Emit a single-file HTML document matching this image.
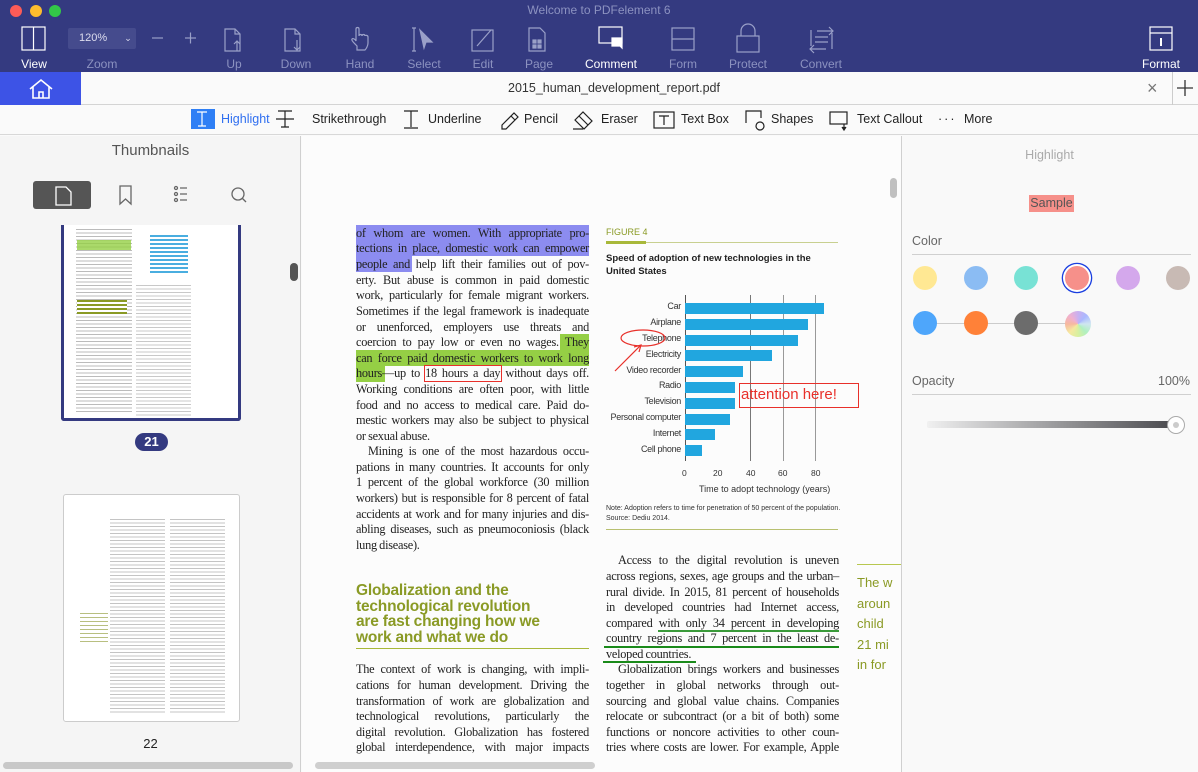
<!DOCTYPE html>
<html><head><meta charset="utf-8"><style>
*{margin:0;padding:0;box-sizing:border-box}
body{width:1198px;height:772px;overflow:hidden;position:relative;background:#fafafa;font-family:"Liberation Sans",sans-serif}
.a{position:absolute}
#top{left:0;top:0;width:1198px;height:72px;background:#343a80}
.tl{top:64px;font-size:12px;color:#8c92c0;transform:translate(-50%,-50%);white-space:nowrap}
.tl.w{color:#fff}
.ct{top:119px;font-size:12.5px;color:#222;transform:translateY(-50%);white-space:nowrap}
.L{position:absolute;width:233px;font-family:"Liberation Serif",serif;font-size:12.3px;color:#222;text-align:justify;text-align-last:justify;white-space:nowrap;line-height:15px;letter-spacing:-0.25px;word-spacing:-0.5px}
.L.e{text-align-last:left}
.bar{position:absolute;left:685px;height:11px;background:#21a6df}
.lab{position:absolute;right:517px;font-size:9px;color:#333;font-family:"Liberation Sans",sans-serif;letter-spacing:-0.3px}
.sw{position:absolute;width:24px;height:24px;border-radius:50%}
.g{color:#8a9a25;font-weight:bold;font-size:15.5px;line-height:15.5px;font-family:"Liberation Sans",sans-serif;letter-spacing:-0.2px}
</style></head><body>
<div id="top" class="a"></div>
<div class="a" style="left:10px;top:5px;width:12px;height:12px;border-radius:50%;background:#fc5b57"></div>
<div class="a" style="left:30px;top:5px;width:12px;height:12px;border-radius:50%;background:#fdbc2e"></div>
<div class="a" style="left:49px;top:5px;width:12px;height:12px;border-radius:50%;background:#33c748"></div>
<div class="a" style="left:0;top:3px;width:1198px;text-align:center;font-size:12px;color:#8c92c0">Welcome to PDFelement 6</div>
<svg class="a" style="left:0;top:20px" width="1198" height="40" fill="none" stroke-width="1.2">
<g stroke="#fff"><rect x="22" y="7" width="23" height="23"/><line x1="33.5" y1="7" x2="33.5" y2="30"/></g>
<g stroke="#9aa0c8"><line x1="152" y1="18" x2="163" y2="18"/><line x1="185" y1="18" x2="196" y2="18"/><line x1="190.5" y1="12.5" x2="190.5" y2="23.5"/>
<path d="M225 9h10l5 5v17h-15z"/><path d="M235 9v5h5"/><path d="M237 31v-10m-3 3l3-3 3 3"/>
<path d="M285 9h10l5 5v17h-15z"/><path d="M295 9v5h5"/><path d="M297 20v10m-3-3l3 3 3-3"/>
<path d="M357 26c-3-3-6-6-5-7s3 0 4 2v-12c0-2 3-2 3 0v7c0-2 3-2 3 0 0-2 3-2 3 0 0-1 3-1 3 1v6c0 3-2 6-3 7h-8z"/>
<path d="M414 8v23m-2-23h4m-4 23h4"/><path d="M420 10l12 12h-6l-2 6z" fill="#9aa0c8"/>
<rect x="472" y="10" width="21" height="21"/><path d="M477 26l14-16"/>
<path d="M529 8h11l5 5v18h-16z"/><rect x="533" y="20" width="3" height="3" fill="#9aa0c8"/><rect x="538" y="20" width="3" height="3" fill="#9aa0c8"/><rect x="533" y="25" width="3" height="3" fill="#9aa0c8"/><rect x="538" y="25" width="3" height="3" fill="#9aa0c8"/>
<rect x="672" y="8" width="22" height="22"/><line x1="672" y1="19" x2="694" y2="19"/>
<rect x="737" y="16" width="22" height="16"/><path d="M741 16v-5a7 7 0 0 1 14 0v5"/>
<path d="M817 11h16m-4-4l4 4-4 4M826 29h-16m4-4l-4 4 4 4M811 10v16M832 13v16M815 17h13M815 22h13"/></g>
<g stroke="#fff"><rect x="599" y="7" width="23" height="16"/><path d="M612 18h10v10l-2-2h-8z" fill="#fff"/>
<rect x="1150" y="7" width="22" height="23"/><line x1="1150" y1="13" x2="1172" y2="13"/><line x1="1161" y1="18" x2="1161" y2="26" stroke-width="2"/></g>
</svg>
<div class="a" style="left:68px;top:28px;width:68px;height:21px;background:#454b8d;border-radius:2px;color:#dde;font-size:11px;line-height:21px;padding-left:11px">120% <span style="margin-left:14px;font-size:9px">&#8964;</span></div>
<div class="a tl w" style="left:34px">View</div>
<div class="a tl" style="left:102px">Zoom</div>
<div class="a tl" style="left:234px">Up</div>
<div class="a tl" style="left:296px">Down</div>
<div class="a tl" style="left:360px">Hand</div>
<div class="a tl" style="left:424px">Select</div>
<div class="a tl" style="left:483px">Edit</div>
<div class="a tl" style="left:539px">Page</div>
<div class="a tl w" style="left:611px">Comment</div>
<div class="a tl" style="left:683px">Form</div>
<div class="a tl" style="left:748px">Protect</div>
<div class="a tl" style="left:821px">Convert</div>
<div class="a tl w" style="left:1161px">Format</div>
<div class="a" style="left:0;top:72px;width:1198px;height:33px;background:#fafafa;border-bottom:1px solid #d4d4d4"></div>
<div class="a" style="left:0;top:72px;width:81px;height:33px;background:#3d53e6"></div>
<svg class="a" style="left:28px;top:78px" width="26" height="22" fill="none" stroke="#fff" stroke-width="1.6"><path d="M2 11L13 2l11 9M5 9v11h16V9M11 20v-6h4v6"/></svg>
<div class="a" style="left:0;top:81px;width:1198px;text-align:center;font-size:12.5px;color:#333;padding-left:30px">2015_human_development_report.pdf</div>
<div class="a" style="left:1147px;top:78px;font-size:18px;color:#777">×</div>
<div class="a" style="left:1172px;top:72px;width:1px;height:33px;background:#ccc"></div>
<svg class="a" style="left:1177px;top:80px" width="16" height="16" stroke="#333" stroke-width="1.3"><path d="M8 0v16M0 8h16"/></svg>
<div class="a" style="left:0;top:105px;width:1198px;height:30px;background:#fafafa;border-bottom:1px solid #d8d8d8"></div>
<div class="a" style="left:191px;top:109px;width:24px;height:20px;background:#2f7ff5"></div>
<svg class="a" style="left:180px;top:107px" width="830" height="26" fill="none" stroke="#222" stroke-width="1.2">
<path d="M17 5h10M22 5v14M18 19h8" stroke="#fff"/>
<path d="M98 4h14M105 4v16M101 20h8M96 12h18"/>
<path d="M224 4h14M231 4v16M224 21h14"/>
<path d="M322 18l12-12 4 4-12 12h-4zM331 9l4 4"/>
<path d="M395 13l8-8 9 9-8 8zM399 9l9 9M393 22h10"/>
<rect x="474" y="5" width="20" height="16"/><path d="M479 9h10M484 9v9"/>
<path d="M566 16v-12h15v7"/><circle cx="580" cy="19" r="4"/>
<rect x="650" y="5" width="17" height="12"/><path d="M664 17v5m-2-2l2 3 2-3" fill="#222"/>
</svg>
<div class="a ct" style="left:221px;color:#2f6ff0">Highlight</div>
<div class="a ct" style="left:312px">Strikethrough</div>
<div class="a ct" style="left:428px">Underline</div>
<div class="a ct" style="left:524px">Pencil</div>
<div class="a ct" style="left:601px">Eraser</div>
<div class="a ct" style="left:681px">Text Box</div>
<div class="a ct" style="left:771px">Shapes</div>
<div class="a ct" style="left:857px">Text Callout</div>
<div class="a ct" style="left:938px;letter-spacing:2px">···</div>
<div class="a ct" style="left:964px">More</div>
<div class="a" style="left:0;top:136px;width:301px;height:636px;background:#f5f5f5;border-right:1px solid #d0d0d0"></div>
<div class="a" style="left:0;top:142px;width:301px;text-align:center;font-size:15px;color:#555">Thumbnails</div>
<div class="a" style="left:33px;top:181px;width:58px;height:28px;background:#555;border-radius:3px"></div>
<svg class="a" style="left:30px;top:182px" width="230" height="26" fill="none" stroke-width="1.3"><path d="M26 5h10l5 5v13h-15z" stroke="#fff"/><path d="M90 4h11v18l-5.5-5-5.5 5z" stroke="#666"/><g stroke="#666"><circle cx="146" cy="6" r="1.5"/><circle cx="146" cy="12" r="1.5"/><circle cx="146" cy="18" r="1.5"/><path d="M150 6h7M150 12h7M150 18h7"/><circle cx="208" cy="12" r="6"/><path d="M212 16l4 4"/></g></svg>
<div class="a" style="left:61px;top:225px;width:180px;height:196px;background:#fff;border:3px solid #343a80;border-top:0;border-radius:0 0 3px 3px"></div>
<div class="a" style="left:76px;top:228px;width:56px;height:185px;background:repeating-linear-gradient(#fff 0 1px,#bbb 1px 2px,#fff 2px 3.5px)"></div>
<div class="a" style="left:136px;top:228px;width:55px;height:190px;background:repeating-linear-gradient(#fff 0 1px,#bbb 1px 2px,#fff 2px 3.5px);opacity:.8"></div>
<div class="a" style="left:136px;top:228px;width:55px;height:57px;background:#fff"></div>
<div class="a" style="left:150px;top:235px;width:38px;height:40px;background:repeating-linear-gradient(#4aaee0 0 2px,#fff 2px 4px)"></div>
<div class="a" style="left:77px;top:240px;width:54px;height:10px;background:#95cf45;opacity:.8"></div>
<div class="a" style="left:77px;top:300px;width:50px;height:16px;background:repeating-linear-gradient(#8a9a25 0 2px,#fff 2px 4px)"></div>
<div class="a" style="left:135px;top:433px;width:33px;height:18px;background:#343a80;border-radius:9px;color:#fff;font-size:13px;font-weight:bold;text-align:center;line-height:18px">21</div>
<div class="a" style="left:63px;top:494px;width:177px;height:228px;background:#fff;border:1px solid #ccc;border-radius:3px"></div>
<div class="a" style="left:110px;top:518px;width:55px;height:195px;background:repeating-linear-gradient(#fff 0 1px,#c4c4c4 1px 2px,#fff 2px 3.5px)"></div>
<div class="a" style="left:170px;top:518px;width:55px;height:195px;background:repeating-linear-gradient(#fff 0 1px,#c4c4c4 1px 2px,#fff 2px 3.5px)"></div>
<div class="a" style="left:80px;top:612px;width:28px;height:30px;background:repeating-linear-gradient(#fff 0 1px,#b8bf80 1px 2px,#fff 2px 4px)"></div>
<div class="a" style="left:0;top:736px;width:301px;text-align:center;font-size:13px;color:#222">22</div>
<div class="a" style="left:290px;top:263px;width:8px;height:18px;background:#555;border-radius:4px"></div>
<div class="a" style="left:3px;top:762px;width:290px;height:7px;background:#c8c8c8;border-radius:4px"></div>
<div class="a" style="left:302px;top:136px;width:599px;height:636px;background:#fcfcfc"></div>
<div class="a" style="left:890px;top:178px;width:7px;height:20px;background:#c0c0c0;border-radius:4px"></div>
<div class="a" style="left:315px;top:762px;width:280px;height:7px;background:#cfcfcf;border-radius:4px"></div>
<div class="a" style="left:356px;top:225px;width:233px;height:31px;background:#8c8cf0"></div>
<div class="a" style="left:356px;top:256px;width:56px;height:16px;background:#8c8cf0"></div>
<div class="a" style="left:560px;top:334px;width:29px;height:16px;background:#95cf45"></div>
<div class="a" style="left:356px;top:350px;width:233px;height:16px;background:#95cf45"></div>
<div class="a" style="left:356px;top:366px;width:29px;height:16px;background:#95cf45"></div>
<div class="a" style="left:424px;top:365px;width:78px;height:17px;border:1.3px solid #e8302a"></div>
<div class="L" style="left:356px;top:226px">of whom are women. With appropriate pro-</div>
<div class="L" style="left:356px;top:241px">tections in place, domestic work can empower</div>
<div class="L" style="left:356px;top:257px">people and help lift their families out of pov-</div>
<div class="L" style="left:356px;top:273px">erty. But abuse is common in paid domestic</div>
<div class="L" style="left:356px;top:288px">work, particularly for female migrant workers.</div>
<div class="L" style="left:356px;top:304px">Sometimes if the legal framework is inadequate</div>
<div class="L" style="left:356px;top:320px">or unenforced, employers use threats and</div>
<div class="L" style="left:356px;top:335px">coercion to pay low or even no wages. They</div>
<div class="L" style="left:356px;top:351px">can force paid domestic workers to work long</div>
<div class="L" style="left:356px;top:366px">hours—up to 18 hours a day without days off.</div>
<div class="L" style="left:356px;top:382px">Working conditions are often poor, with little</div>
<div class="L" style="left:356px;top:398px">food and no access to medical care. Paid do-</div>
<div class="L" style="left:356px;top:413px">mestic workers may also be subject to physical</div>
<div class="L e" style="left:356px;top:429px">or sexual abuse.</div>
<div class="L" style="left:356px;top:444px;text-indent:12px">Mining is one of the most hazardous occu-</div>
<div class="L" style="left:356px;top:460px">pations in many countries. It accounts for only</div>
<div class="L" style="left:356px;top:475px">1 percent of the global workforce (30 million</div>
<div class="L" style="left:356px;top:491px">workers) but is responsible for 8 percent of fatal</div>
<div class="L" style="left:356px;top:507px">accidents at work and for many injuries and dis-</div>
<div class="L" style="left:356px;top:522px">abling diseases, such as pneumoconiosis (black</div>
<div class="L e" style="left:356px;top:538px">lung disease).</div>
<div class="a g" style="left:356px;top:583px">Globalization and the<br>technological revolution<br>are fast changing how we<br>work and what we do</div>
<div class="a" style="left:356px;top:648px;width:233px;height:1px;background:#a8b83a"></div>
<div class="L" style="left:356px;top:662px">The context of work is changing, with impli-</div>
<div class="L" style="left:356px;top:678px">cations for human development. Driving the</div>
<div class="L" style="left:356px;top:694px">transformation of work are globalization and</div>
<div class="L" style="left:356px;top:709px">technological revolutions, particularly the</div>
<div class="L" style="left:356px;top:725px">digital revolution. Globalization has fostered</div>
<div class="L" style="left:356px;top:740px">global interdependence, with major impacts</div>
<div class="a" style="left:606px;top:227px;font-size:9px;color:#8a9a25">FIGURE 4</div>
<div class="a" style="left:606px;top:242px;width:232px;height:1px;background:#c8d090"></div>
<div class="a" style="left:606px;top:241px;width:40px;height:3px;background:#a8b83a"></div>
<div class="a" style="left:606px;top:253px;font-size:9.5px;font-weight:bold;color:#222;line-height:12.5px">Speed of adoption of new technologies in the<br>United States</div>
<div class="a" style="left:685px;top:295px;width:1px;height:166px;background:#555"></div>
<div class="a" style="left:750px;top:295px;width:1px;height:166px;background:#777"></div>
<div class="a" style="left:783px;top:295px;width:1px;height:166px;background:#999"></div>
<div class="a" style="left:815px;top:295px;width:1px;height:166px;background:#999"></div>
<div class="bar" style="top:303px;width:139px"></div>
<div class="bar" style="top:319px;width:123px"></div>
<div class="bar" style="top:335px;width:113px"></div>
<div class="bar" style="top:350px;width:87px"></div>
<div class="bar" style="top:366px;width:58px"></div>
<div class="bar" style="top:382px;width:50px"></div>
<div class="bar" style="top:398px;width:50px"></div>
<div class="bar" style="top:414px;width:45px"></div>
<div class="bar" style="top:429px;width:30px"></div>
<div class="bar" style="top:445px;width:17px"></div>
<div class="lab" style="top:301px">Car</div>
<div class="lab" style="top:317px">Airplane</div>
<div class="lab" style="top:333px">Telephone</div>
<div class="lab" style="top:349px">Electricity</div>
<div class="lab" style="top:365px">Video recorder</div>
<div class="lab" style="top:380px">Radio</div>
<div class="lab" style="top:396px">Television</div>
<div class="lab" style="top:412px">Personal computer</div>
<div class="lab" style="top:428px">Internet</div>
<div class="lab" style="top:444px">Cell phone</div>
<div class="a" style="left:682px;top:468px;font-size:8.5px;color:#333;width:150px"><span class="a" style="left:0">0</span><span class="a" style="left:31px">20</span><span class="a" style="left:64px">40</span><span class="a" style="left:96px">60</span><span class="a" style="left:129px">80</span></div>
<div class="a" style="left:699px;top:484px;font-size:9px;color:#333">Time to adopt technology (years)</div>
<div class="a" style="left:606px;top:504px;font-size:7px;color:#333;line-height:9.5px">Note: Adoption refers to time for penetration of 50 percent of the population.<br>Source: Dediu 2014.</div>
<div class="a" style="left:606px;top:529px;width:232px;height:1px;background:#b8c070"></div>
<svg class="a" style="left:605px;top:325px" width="260" height="90" fill="none" stroke="#e8302a" stroke-width="1.2"><ellipse cx="38" cy="13" rx="22" ry="8"/><path d="M10 46L36 20m-7 2l7-2-2 7"/></svg>
<div class="a" style="left:739px;top:383px;width:120px;height:25px;border:1.3px solid #e8302a;color:#e8302a;font-size:15px;line-height:22px;padding-left:1px">attention here!</div>
<div class="L" style="left:606px;top:553px;text-indent:12px">Access to the digital revolution is uneven</div>
<div class="L" style="left:606px;top:569px">across regions, sexes, age groups and the urban–</div>
<div class="L" style="left:606px;top:585px">rural divide. In 2015, 81 percent of households</div>
<div class="L" style="left:606px;top:600px">in developed countries had Internet access,</div>
<div class="L" style="left:606px;top:616px">compared with only 34 percent in developing</div>
<div class="L" style="left:606px;top:631px">country regions and 7 percent in the least de-</div>
<div class="L e" style="left:606px;top:647px">veloped countries.</div>
<div class="a" style="left:658px;top:630px;width:181px;height:1.5px;background:#3a9a3a"></div>
<div class="a" style="left:604px;top:646px;width:235px;height:1.5px;background:#1a8a1a"></div>
<div class="a" style="left:603px;top:661px;width:93px;height:1.5px;background:#1a8a1a"></div>
<div class="L" style="left:606px;top:662px;text-indent:12px">Globalization brings workers and businesses</div>
<div class="L" style="left:606px;top:678px">together in global networks through out-</div>
<div class="L" style="left:606px;top:694px">sourcing and global value chains. Companies</div>
<div class="L" style="left:606px;top:709px">relocate or subcontract (or a bit of both) some</div>
<div class="L" style="left:606px;top:725px">functions or noncore activities to other coun-</div>
<div class="L" style="left:606px;top:740px">tries where costs are lower. For example, Apple</div>
<div class="a" style="left:857px;top:564px;width:44px;height:1px;background:#b8c850"></div>
<div class="a" style="left:857px;top:573px;width:44px;overflow:hidden;white-space:nowrap;color:#8a9a25;font-size:13px;line-height:20.5px">The w<br>aroun<br>child<br>21 mi<br>in for</div>
<div class="a" style="left:901px;top:136px;width:297px;height:636px;background:#f9f9f9;border-left:1px solid #d0d0d0"></div>
<div class="a" style="left:901px;top:148px;width:297px;text-align:center;font-size:12.5px;color:#aaa">Highlight</div>
<div class="a" style="left:1029px;top:195px;width:45px;height:17px;background:#f6908a;color:#555;font-size:12.5px;line-height:17px;text-align:center">Sample</div>
<div class="a" style="left:912px;top:234px;font-size:12.5px;color:#666">Color</div>
<div class="a" style="left:912px;top:254px;width:279px;height:1px;background:#d0d0d0"></div>
<div class="sw" style="left:913px;top:266px;background:#ffe893"></div>
<div class="sw" style="left:964px;top:266px;background:#8bbcf3"></div>
<div class="sw" style="left:1014px;top:266px;background:#78e2d5"></div>
<div class="sw" style="left:1065px;top:266px;background:#f6908a;box-shadow:0 0 0 2px #fff,0 0 0 3.3px #1a3fe0"></div>
<div class="sw" style="left:1116px;top:266px;background:#d4a8ec"></div>
<div class="sw" style="left:1166px;top:266px;background:#c8bab4"></div>
<div class="a" style="left:925px;top:323px;width:153px;height:1px;background:#ccc"></div>
<div class="sw" style="left:913px;top:311px;background:#4ea6fb"></div>
<div class="sw" style="left:964px;top:311px;background:#ff8138"></div>
<div class="sw" style="left:1014px;top:311px;background:#6c6c6c"></div>
<div class="sw" style="left:1065px;top:311px;width:26px;height:26px;background:conic-gradient(#c9b0f0,#aab8ff,#cfe6f0,#b0f0c0,#d8f0a0,#f6e8a0,#f6b8a0,#f0b0d0,#c9b0f0)"></div>
<div class="a" style="left:912px;top:374px;font-size:12.5px;color:#666">Opacity</div>
<div class="a" style="left:1158px;top:374px;font-size:12.5px;color:#666">100%</div>
<div class="a" style="left:912px;top:394px;width:279px;height:1px;background:#d0d0d0"></div>
<div class="a" style="left:927px;top:421px;width:248px;height:7px;background:linear-gradient(90deg,rgba(80,80,80,0.05),#4a4a4e);border-radius:2px"></div>
<div class="a" style="left:1167px;top:416px;width:18px;height:18px;border-radius:50%;background:#fff;border:1px solid #aaa"></div>
<div class="a" style="left:1173px;top:422px;width:6px;height:6px;border-radius:50%;background:#ccc"></div>
</body></html>
